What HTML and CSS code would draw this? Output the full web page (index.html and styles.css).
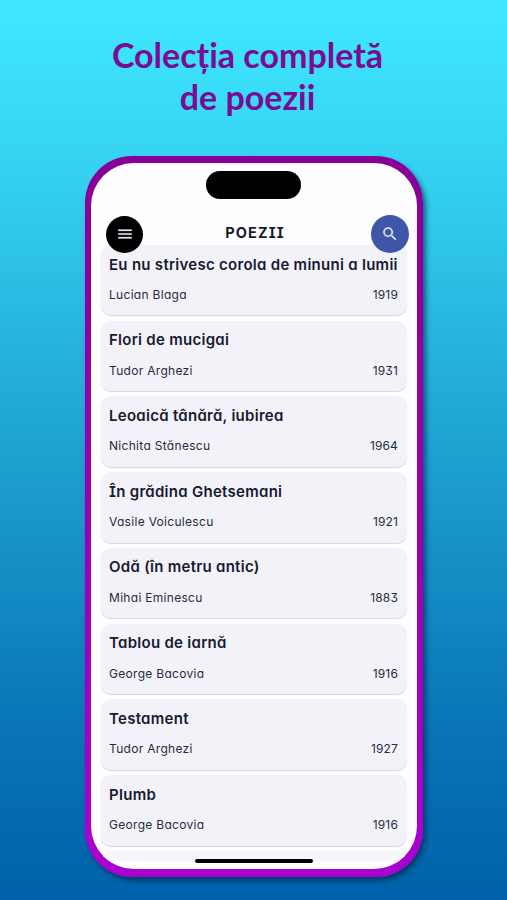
FILE: index.html
```
<!DOCTYPE html>
<html lang="ro">
<head>
<meta charset="utf-8">
<title>Colecția completă de poezii</title>
<link rel="stylesheet" href="styles.css">
</head>
<body>
<h1 class="headline"><span class="line-one">Colecția completă</span><br><span class="line-two">de poezii</span></h1>
<main class="phone">
  <div class="screen">
    <div class="island"></div>
    <header class="bar">
      <button class="round menu" aria-label="Meniu"><svg width="18" height="18" viewBox="0 0 24 24"><path d="M3 18h18v-2H3v2zm0-5h18v-2H3v2zm0-7v2h18V6H3z"/></svg></button>
      <h2 class="title">POEZII</h2>
      <button class="round search" aria-label="Caută"><svg width="18" height="18" viewBox="0 0 24 24"><path d="M15.5 14h-.79l-.28-.27A6.471 6.471 0 0 0 16 9.5 6.5 6.5 0 1 0 9.5 16c1.61 0 3.09-.59 4.23-1.57l.27.28v.79l5 4.99L20.49 19l-4.99-5zm-6 0C7.01 14 5 11.99 5 9.5S7.01 5 9.5 5 14 7.01 14 9.5 11.99 14 9.5 14z"/></svg></button>
    </header>
    <section class="list">
      <article class="card"><h3>Eu nu strivesc corola de minuni a lumii</h3><p><span>Lucian Blaga</span><span>1919</span></p></article>
      <article class="card"><h3>Flori de mucigai</h3><p><span>Tudor Arghezi</span><span>1931</span></p></article>
      <article class="card"><h3>Leoaică tânără, iubirea</h3><p><span>Nichita Stănescu</span><span>1964</span></p></article>
      <article class="card"><h3>În grădina Ghetsemani</h3><p><span>Vasile Voiculescu</span><span>1921</span></p></article>
      <article class="card"><h3>Odă (în metru antic)</h3><p><span>Mihai Eminescu</span><span>1883</span></p></article>
      <article class="card"><h3>Tablou de iarnă</h3><p><span>George Bacovia</span><span>1916</span></p></article>
      <article class="card"><h3>Testament</h3><p><span>Tudor Arghezi</span><span>1927</span></p></article>
      <article class="card"><h3>Plumb</h3><p><span>George Bacovia</span><span>1916</span></p></article>
      <div class="card next"></div>
    </section>
    <div class="home"></div>
  </div>
</main>
</body>
</html>
```
FILE: styles.css
```
* { box-sizing: border-box; }
body {
  margin: 0;
  height: 900px;
  overflow: hidden;
  background: linear-gradient(#40e8ff, #36d6f3 16%, #1da0d0 51%, #0873b5 82%, #0062aa);
  font-family: Inter, sans-serif;
  font-feature-settings: "cv11", "cv08", "cv09";
}
h1, h2, h3, p { margin: 0; }
.headline {
  height: 155.5px;
  padding-top: 34px;
  padding-right: 12px;
  text-align: center;
  color: #7b0b95;
  font: bold 34px/42px Lato, sans-serif;
}
.phone {
  width: 338px;
  height: 721.5px;
  margin-left: 85px;
  padding: 7.5px 6px 8px;
  border-radius: 47px;
  background: linear-gradient(#870096, #aa00d2);
  box-shadow: 3px 4px 5px rgba(0, 35, 65, .6);
}
.screen {
  position: relative;
  height: 706px;
  overflow: hidden;
  border-radius: 43px;
  background: #fefdff;
}
.island {
  width: 95px;
  height: 28px;
  margin: 8px auto 0 115px;
  border-radius: 14px;
  background: #000;
}
.bar {
  position: relative;
  z-index: 1;
  display: flex;
  justify-content: space-between;
  align-items: center;
  height: 38px;
  margin-top: 16px;
  padding: 0 8px 0 15px;
}
.round {
  display: grid;
  place-items: center;
  width: 38px;
  height: 38px;
  padding: 0;
  border: 0;
  border-radius: 50%;
  background: #3d56a8;
}
.menu { width: 37px; height: 37px; background: #000; }
.round svg { display: block; fill: #dfe4ee; stroke: #dfe4ee; stroke-width: .3; }
.title {
  padding: 0 4px 3px 0;
  color: #181a2c;
  font-size: 14.5px;
  font-weight: 700;
  letter-spacing: 1.1px;
}
.list {
  display: grid;
  gap: 5.3px;
  margin: -8px 10px 0 9.5px;
}
.card {
  height: 70.45px;
  padding: 8.5px 9px 0 8.5px;
  border-radius: 10px;
  background: #f3f2f9;
  box-shadow: 0 1px 1px rgba(60, 60, 75, .2);
}
.card h3 {
  color: #181a30;
  font-size: 15px;
  line-height: 22px;
  font-weight: 600;
  letter-spacing: .28px;
  white-space: nowrap;
}
.card p {
  display: flex;
  justify-content: space-between;
  margin-top: 10.5px;
  color: #282b3c;
  font-size: 12px;
  line-height: 17px;
  letter-spacing: .3px;
}
.card p span:last-child { letter-spacing: .15px; }
.next { height: 10px; border-radius: 10px 10px 0 0; box-shadow: none; background: #f7f6fb; }
.home {
  position: absolute;
  left: 104px;
  bottom: 6px;
  width: 118px;
  height: 4px;
  border-radius: 2px;
  background: #000;
}
```
